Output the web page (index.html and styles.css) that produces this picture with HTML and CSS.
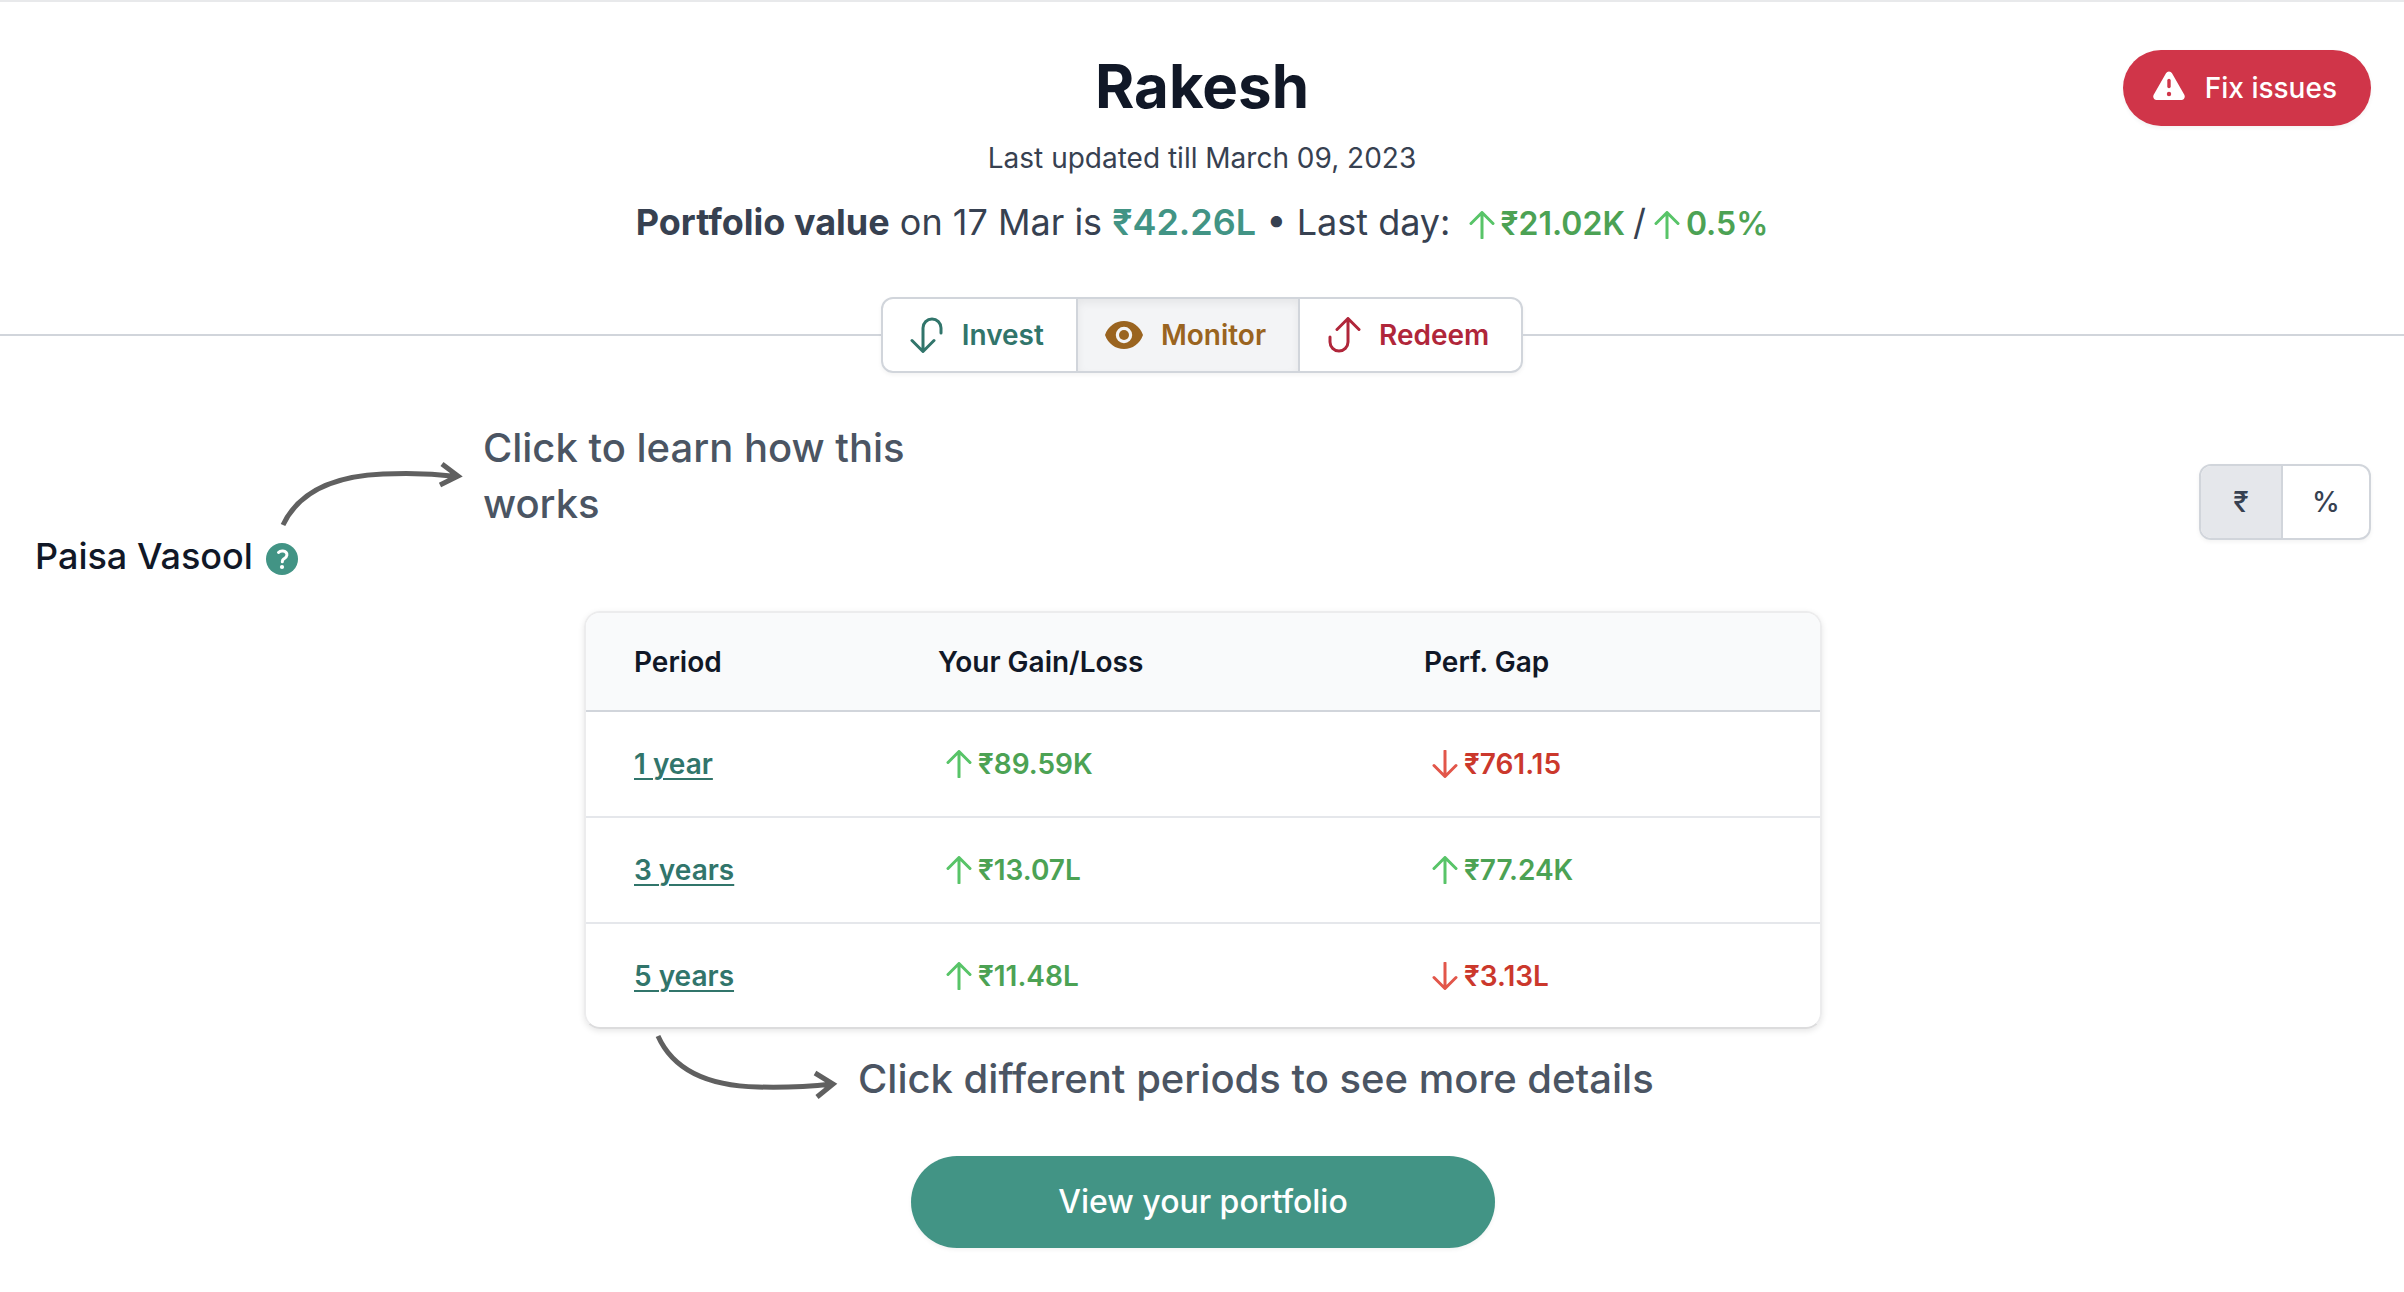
FILE: index.html
```html
<!DOCTYPE html>
<html lang="en">
<head>
    <meta charset="utf-8">
    <title>Portfolio - Rakesh</title>
    <link rel="stylesheet" href="styles.css">
</head>
<body>

    <!-- Shared arrow icons -->
    <svg class="sprite" aria-hidden="true">
        <symbol id="arrow-up" viewBox="0 0 24 28">
            <path d="M12 27V2M1 12.500 12 1.500 23 12.500" />
        </symbol>
        <symbol id="arrow-down" viewBox="0 0 24 28">
            <path d="M12 1v25M1 15.500 12 26.500 23 15.500" />
        </symbol>
    </svg>

    <header class="page-header">
        <div class="summary">
            <h1>Rakesh</h1>
            <p class="updated">Last updated till March 09, 2023</p>
            <p class="value-line">
                <strong>Portfolio value</strong> on 17 Mar is <span class="total">₹42.26L</span> • Last day:
                <span class="change up"><svg class="arrow"><use href="#arrow-up" /></svg>₹21.02K</span><span class="slash">/</span><span class="change up tight"><svg class="arrow"><use href="#arrow-up" /></svg>0.5%</span>
            </p>
        </div>
        <button class="fix-button" type="button">
            <svg width="32" height="30" viewBox="0 0 32 30" aria-hidden="true">
                <path fill="#fff" d="M13 2.200a3.400 3.400 0 0 1 6 0l12.300 21.500c1.300 2.400-.2 5.300-2.900 5.300H3.600C.9 29-.6 26.100.7 23.700z" />
                <path stroke="#d03549" stroke-width="3.400" stroke-linecap="round" d="M16 9.500v6" />
                <circle cx="16" cy="23" r="2.200" fill="#d03549" />
            </svg>
            Fix issues
        </button>
    </header>

    <!-- Invest / Monitor / Redeem -->
    <nav class="tabs">
        <div class="tab-group">
            <button class="tab invest" type="button">
                <svg width="34" height="36" viewBox="0 0 34 36" aria-hidden="true">
                    <path d="M13 34V11a9 9 0 0 1 18 0v5M2 23.500l11 11 11-11" />
                </svg>
                Invest
            </button>
            <button class="tab monitor active" type="button">
                <svg width="38" height="28" viewBox="0 0 38 28" aria-hidden="true">
                    <path fill="currentColor" fill-rule="evenodd" stroke="none" d="M19 0c8.500 0 15.800 5.100 19 14-3.200 8.900-10.500 14-19 14S3.200 22.900 0 14C3.200 5.100 10.500 0 19 0zm0 5.800a8.200 8.200 0 1 0 0 16.400 8.200 8.200 0 0 0 0-16.400z" />
                    <circle cx="19" cy="14" r="5" fill="currentColor" stroke="none" />
                </svg>
                Monitor
            </button>
            <button class="tab redeem" type="button">
                <svg width="34" height="36" viewBox="0 0 34 36" aria-hidden="true">
                    <path d="M21 2v23a9 9 0 0 1-18 0v-5M10 12.500l11-11 11 11" />
                </svg>
                Redeem
            </button>
        </div>
    </nav>

    <main>
        <div class="section-head">
            <h2>
                Paisa Vasool
                <button class="help" type="button" aria-label="How this works">
                    <svg width="32" height="32" viewBox="0 0 32 32" aria-hidden="true">
                        <circle cx="16" cy="16" r="16" />
                        <path d="M12.500 9.500c1.200-1.300 2.800-1.700 4.400-1.500 2.700.3 4.300 2 4 4.200-.2 2-1.700 2.800-3 3.600-1.200.8-1.600 1.300-1.600 3" />
                        <circle class="dot" cx="16" cy="24" r="2.100" />
                    </svg>
                </button>
            </h2>
            <div class="hint">
                <svg width="184" height="72" viewBox="0 0 184 72" aria-hidden="true">
                    <path d="M4 69C20 35 56 20 104 18q38-2 74 2.500M163 8l16 12-18 9" />
                </svg>
                <p>Click to learn how this works</p>
            </div>
            <div class="unit-toggle">
                <button class="active" type="button">₹</button>
                <button type="button">%</button>
            </div>
        </div>

        <div class="returns">
            <div class="card">
                <table>
                    <thead>
                        <tr><th class="col-period">Period</th><th class="col-gain">Your Gain/Loss</th><th>Perf. Gap</th></tr>
                    </thead>
                    <tbody>
                        <tr>
                            <td><a href="#">1 year</a></td>
                            <td><span class="change up"><svg class="arrow"><use href="#arrow-up" /></svg>₹89.59K</span></td>
                            <td><span class="change down"><svg class="arrow"><use href="#arrow-down" /></svg>₹761.15</span></td>
                        </tr>
                        <tr>
                            <td><a href="#">3 years</a></td>
                            <td><span class="change up"><svg class="arrow"><use href="#arrow-up" /></svg>₹13.07L</span></td>
                            <td><span class="change up"><svg class="arrow"><use href="#arrow-up" /></svg>₹77.24K</span></td>
                        </tr>
                        <tr>
                            <td><a href="#">5 years</a></td>
                            <td><span class="change up"><svg class="arrow"><use href="#arrow-up" /></svg>₹11.48L</span></td>
                            <td><span class="change down"><svg class="arrow"><use href="#arrow-down" /></svg>₹3.13L</span></td>
                        </tr>
                    </tbody>
                </table>
            </div>
            <div class="hint hint-below">
                <svg width="184" height="78" viewBox="0 -2 184 78" aria-hidden="true">
                    <path d="M4 5C20 41 56 55 104 56q38 1 74-3M161 42l18 11-16 13" />
                </svg>
                <p>Click different periods to see more details</p>
            </div>
        </div>

        <button class="view-button" type="button">View your portfolio</button>
    </main>

</body>
</html>
```
FILE: styles.css
```css
* { box-sizing: border-box; }
body {
    margin: 0;
    border-top: 2px solid #e8e9eb;
    font-family: Inter, sans-serif;
    font-size: 28px;
    line-height: 40px;
    color: #374151;
    background: #fff;
}
h1, h2, p { margin: 0; }
button { font: inherit; color: inherit; cursor: pointer; border: 0; padding: 0; background: none; }
svg { flex: none; }
.sprite { display: none; }

/* Header */
.page-header {
    display: grid;
    grid-template-columns: 1fr auto 1fr;
    align-items: start;
    padding: 48px 33px 0;
}
.summary { grid-column: 2; text-align: center; }
h1 { font-size: 60px; line-height: 72px; font-weight: 700; color: #111827; }
.updated { margin-top: 16px; }
.value-line { margin-top: 20px; font-size: 36px; line-height: 48px; }
.value-line strong { font-weight: 700; }
.value-line .change { font-size: 32px; }
.total { font-weight: 600; color: #429485; }
.slash { margin: 0 8px; }
.fix-button {
    justify-self: end;
    display: flex;
    align-items: center;
    gap: 20px;
    height: 76px;
    padding: 0 34px 0 30px;
    border-radius: 38px;
    font-weight: 500;
    color: #fff;
    background: #d03549;
    box-shadow: 0 2px 4px rgba(0, 0, 0, 0.05);
}
.fix-button svg { margin-bottom: 4px; }

/* Gain and loss figures */
.change { font-weight: 600; white-space: nowrap; }
.arrow {
    width: 26px;
    height: 28px;
    margin: 0 6px 0 8px;
    vertical-align: -4px;
    fill: none;
    stroke-width: 3;
    stroke-linecap: round;
    stroke-linejoin: round;
}
.tight .arrow { margin-left: 0; }
.up { color: #4ca254; }
.up .arrow { stroke: #58c468; }
.down { color: #cb382c; }
.down .arrow { stroke: #e2564a; }

/* Tabs */
.tabs { display: flex; align-items: center; margin-top: 49px; }
.tabs::before, .tabs::after { content: ""; flex: 1; height: 2px; background: #d1d5db; }
.tab-group, .unit-toggle {
    display: flex;
    border: 2px solid #d1d5db;
    border-radius: 12px;
    overflow: hidden;
    box-shadow: 0 2px 4px rgba(0, 0, 0, 0.05);
}
.tab {
    display: flex;
    align-items: center;
    gap: 18px;
    height: 72px;
    padding: 0 32px 0 27px;
    font-weight: 600;
}
.tab svg { fill: none; stroke: currentColor; stroke-width: 3; stroke-linecap: round; stroke-linejoin: round; }
.tab + .tab, .unit-toggle button + button { border-left: 2px solid #d1d5db; }
.invest { color: #31756b; }
.monitor { color: #9a6420; }
.redeem { color: #b0263a; }
.tab.active { background: #f3f4f6; box-shadow: inset 0 4px 8px rgba(0, 0, 0, 0.06); }

/* Title, hint and unit toggle */
main { padding: 47px 33px 44px 35px; }
.section-head { display: flex; align-items: flex-end; }
h2 {
    display: flex;
    align-items: center;
    gap: 13px;
    font-size: 36px;
    line-height: 56px;
    font-weight: 500;
    color: #111827;
}
.help { display: flex; margin-top: 6px; border-radius: 16px; }
.help circle { fill: #429485; }
.help path { fill: none; stroke: #fff; stroke-width: 3; stroke-linecap: round; }
.help .dot { fill: #fff; }
.hint {
    display: flex;
    align-items: center;
    gap: 20px;
    font-size: 40px;
    line-height: 56px;
    font-weight: 500;
    color: #4b5563;
}
.hint path { fill: none; stroke: #606060; stroke-width: 5; }
.section-head .hint { align-self: flex-start; margin: 0 0 52px -19px; }
.section-head .hint p { max-width: 448px; }
.section-head .hint svg { margin-top: 32px; }
.unit-toggle { align-self: center; margin-left: auto; }
.unit-toggle button { width: 88px; height: 72px; font-weight: 500; }
.unit-toggle .active { width: 80px; background: #e5e7eb; }

/* Returns table */
.returns { max-width: 1238px; margin: 27px auto 0; }
.card {
    border: 2px solid #ececed;
    border-bottom-color: #dcdcdd;
    border-radius: 16px;
    overflow: hidden;
    box-shadow: 0 2px 6px rgba(0, 0, 0, 0.1);
}
table { width: 100%; border-collapse: collapse; table-layout: fixed; text-align: left; }
.col-period { width: 304px; }
.col-gain { width: 486px; }
th { height: 98px; padding: 0 48px; font-weight: 600; color: #111827; background: #f9fafb; border-bottom: 2px solid #d1d5db; }
td { height: 106px; padding: 0 48px; font-weight: 600; border-bottom: 2px solid #e5e7eb; }
tr:last-child td { height: 104px; border-bottom: 0; }
td a { color: #31756b; text-decoration-thickness: 2px; text-underline-offset: 4px; }
.hint-below { align-items: flex-end; margin-left: 70px; }

.view-button {
    display: block;
    width: 584px;
    max-width: 100%;
    height: 92px;
    margin: 49px auto 0;
    border-radius: 46px;
    font-size: 32px;
    font-weight: 500;
    color: #fff;
    background: #429485;
    box-shadow: 0 2px 4px rgba(0, 0, 0, 0.05);
}
```
